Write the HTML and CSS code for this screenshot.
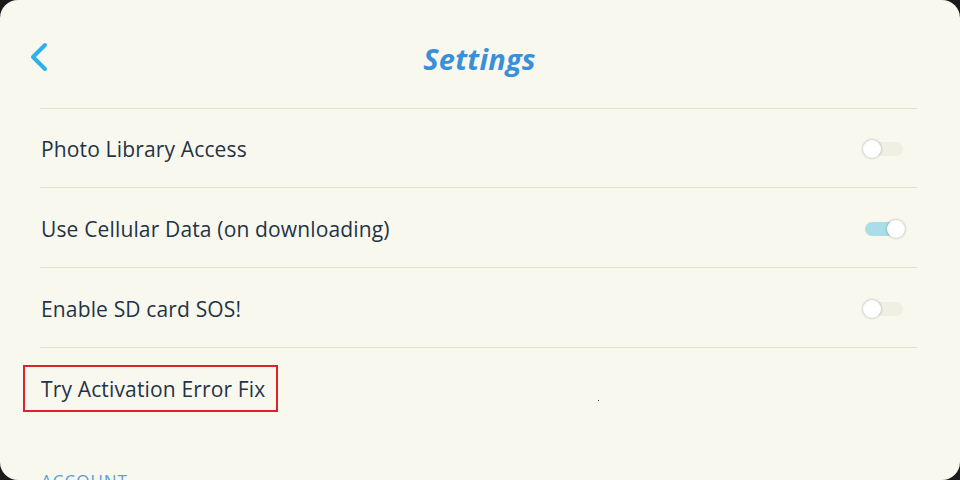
FILE: index.html
```html
<!DOCTYPE html>
<html>
<head>
<meta charset="utf-8">
<link rel="stylesheet" href="styles.css">
</head>
<body>
<div class="screen">
  <header class="header">
    <svg class="back" width="22" height="30" viewBox="0 0 22 30"><path d="M17 3 L5 15 L17 27" fill="none" stroke="#2db1ea" stroke-width="4" stroke-linecap="round" stroke-linejoin="round"/></svg>
    <h1 class="title">Settings</h1>
  </header>
  <ul class="list">
    <li class="row"><span class="label">Photo Library Access</span><span class="toggle"><span class="knob"></span></span></li>
    <li class="row"><span class="label">Use Cellular Data (on downloading)</span><span class="toggle on"><span class="knob"></span></span></li>
    <li class="row"><span class="label">Enable SD card SOS!</span><span class="toggle"><span class="knob"></span></span></li>
    <li class="row last"><span class="label">Try Activation Error Fix</span><span class="highlight"></span><span class="speck"></span></li>
  </ul>
  <div class="section">ACCOUNT</div>
</div>
</body>
</html>
```
FILE: styles.css
```css
html, body { margin: 0; padding: 0; background: #1a1a1a; }
body { width: 960px; height: 480px; overflow: hidden; font-family: "Open Sans", "Noto Sans", sans-serif; }
.screen {
  width: 960px; height: 480px; background: #f9f8ef; border-radius: 18px;
  overflow: hidden; box-sizing: border-box; padding: 0 43px 0 40px;
}
.header {
  position: relative; height: 109px; border-bottom: 1px solid #e3dfc8;
  display: flex; align-items: center; justify-content: center; box-sizing: border-box;
}
.back { position: absolute; left: -12px; top: 42px; }
.title {
  margin: 0; font-size: 29px; font-weight: 700; font-style: italic; color: #3a90d8;
  letter-spacing: 0.2px; margin-top: 8px; margin-left: 2px;
}
.list { list-style: none; margin: 0; padding: 0; }
.row {
  position: relative; height: 80px; border-bottom: 1px solid #e3dfc8; box-sizing: border-box;
  display: flex; align-items: center; justify-content: space-between; padding-top: 2px;
}
.row:first-child { height: 79px; }
.row.last { border-bottom: none; }
.label { font-size: 21px; color: #1f3447; margin-left: 1px; letter-spacing: 0.15px; }
.toggle {
  position: relative; width: 40px; height: 14px; border-radius: 7px; background: #efefe2;
  margin-right: 14px;
}
.toggle .knob {
  position: absolute; left: 0; top: -2px; width: 18px; height: 18px; border-radius: 50%;
  background: #fff; box-shadow: 0 0 2px 1px rgba(0,0,0,0.16);
}
.toggle.on { background: #a9dde8; margin-right: 12px; }
.toggle.on .knob { left: 22px; }
.highlight {
  position: absolute; left: -17px; top: 17px; width: 255px; height: 47px;
  border: 2px solid #d9232d; box-sizing: border-box;
}
.speck { position: absolute; left: 558px; top: 52px; width: 1px; height: 1px; background: #444; }
.section { margin-top: 41px; font-size: 17px; color: #5b9fd8; margin-left: 1px; letter-spacing: 1px; }
```
